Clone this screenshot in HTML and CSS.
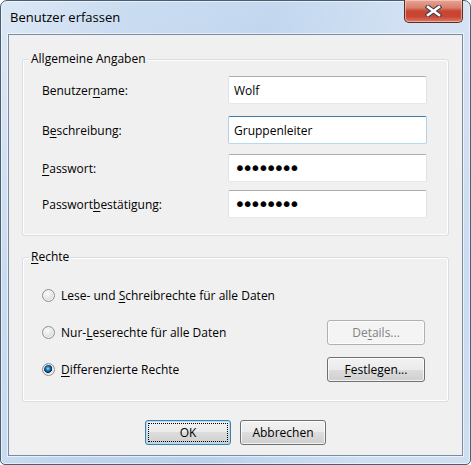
FILE: index.html
```html
<!DOCTYPE html>
<html lang="de">
<head>
    <meta charset="UTF-8">
    <title>Benutzer erfassen</title>
    <link rel="stylesheet" href="styles.css">
</head>
<body>
    <div class="window">
        <div class="titlebar">
            <span class="title">Benutzer erfassen</span>
            <button class="close-btn" type="button" aria-label="Schließen">
                <svg width="17" height="12" viewBox="0 0 17 12">
                    <path d="M3 2 L14 10 M14 2 L3 10" stroke="#3a3f48" stroke-width="4.6" stroke-linecap="square" fill="none"/>
                    <path d="M3 2 L14 10 M14 2 L3 10" stroke="#ffffff" stroke-width="2.6" stroke-linecap="square" fill="none"/>
                </svg>
            </button>
        </div>

        <form class="client">
            <fieldset class="group general">
                <legend>Allgemeine Angaben</legend>
                <div class="group-body">
                    <div class="field row-1">
                        <label for="name">Benutzer<u>n</u>ame:</label>
                        <input id="name" class="textbox" type="text" value="Wolf">
                    </div>
                    <div class="field row-2">
                        <label for="desc">B<u>e</u>schreibung:</label>
                        <input id="desc" class="textbox focused" type="text" value="Gruppenleiter">
                    </div>
                    <div class="field row-3">
                        <label for="pw"><u>P</u>asswort:</label>
                        <input id="pw" class="textbox password" type="password" value="geheim12">
                    </div>
                    <div class="field row-4">
                        <label for="pw2">Passwort<u>b</u>estätigung:</label>
                        <input id="pw2" class="textbox password" type="password" value="geheim12">
                    </div>
                </div>
            </fieldset>

            <fieldset class="group rights">
                <legend><u>R</u>echte</legend>
                <div class="group-body rights-grid">
                    <label class="radio wide">
                        <input type="radio" name="rights">
                        <span>Lese- und <u>S</u>chreibrechte für alle Daten</span>
                    </label>
                    <label class="radio">
                        <input type="radio" name="rights">
                        <span>Nur-<u>L</u>eserechte für alle Daten</span>
                    </label>
                    <button class="btn" type="button" disabled>De<u>t</u>ails...</button>
                    <label class="radio">
                        <input type="radio" name="rights" checked>
                        <span><u>D</u>ifferenzierte Rechte</span>
                    </label>
                    <button class="btn" type="button"><u>F</u>estlegen...</button>
                </div>
            </fieldset>

            <div class="dialog-buttons">
                <button class="btn default" type="submit">OK</button>
                <button class="btn" type="button">Abbrechen</button>
            </div>
        </form>
    </div>
</body>
</html>
```

FILE: styles.css
```css
* {
    margin: 0;
    padding: 0;
    box-sizing: border-box;
}

body {
    background: #ffffff;
    font-family: 'Open Sans', 'Noto Sans', sans-serif;
    font-size: 12px;
    color: #000;
}

u {
    text-underline-offset: 2px;
}

/* Window frame */
.window {
    width: 471px;
    height: 465px;
    border: 1px solid #4b5d72;
    border-radius: 7px 7px 5px 5px;
    padding: 0 7px 8px 7px;
    display: flex;
    flex-direction: column;
    background:
        linear-gradient(100deg, rgba(255, 255, 255, 0.4) 0%, rgba(255, 255, 255, 0.1) 25%, rgba(255, 255, 255, 0) 50%, rgba(255, 255, 255, 0.3) 80%),
        linear-gradient(180deg, #c4d8ef 0%, #b4cdea 60%, #b9d1ec 100%);
    box-shadow: inset 0 0 0 1px rgba(255, 255, 255, 0.55);
}

.titlebar {
    height: 33px;
    display: flex;
    justify-content: space-between;
    align-items: flex-start;
}

.title {
    font-size: 13px;
    margin: 7px 0 0 2px;
    line-height: 18px;
}

.close-btn {
    width: 59px;
    height: 23px;
    margin-top: -1px;
    border: 1px solid #5b2b27;
    border-top: none;
    border-radius: 0 0 5px 5px;
    background: linear-gradient(180deg, #e8a595 0%, #d7806c 35%, #c8452f 50%, #c94535 75%, #dc7a64 100%);
    box-shadow: inset 0 0 0 1px rgba(255, 220, 210, 0.55);
    display: flex;
    align-items: center;
    justify-content: center;
}

/* Client area */
.client {
    flex: 1;
    background: #f0f0f0;
    border: 1px solid #7b8ca0;
    box-shadow: 0 0 0 1px rgba(255, 255, 255, 0.6);
    padding: 16px 13px 0 13px;
    display: flex;
    flex-direction: column;
}

.group {
    border: 1px solid #d5dfe5;
    border-radius: 3px;
    box-shadow: inset 0 0 0 1px #ffffff;
    min-inline-size: 0;
}

.group legend {
    margin-left: 6px;
    padding: 0 2px;
    line-height: 16px;
    background: #f0f0f0;
}

.group-body {
    padding: 9px 21px 17px 19px;
}

/* Allgemeine Angaben */
.field {
    display: flex;
    align-items: center;
    justify-content: space-between;
}

.row-2 { margin-top: 12px; }
.row-3 { margin-top: 10px; }
.row-4 { margin-top: 8px; }

.textbox {
    width: 199px;
    height: 28px;
    padding: 0 5px;
    font-family: inherit;
    font-size: 12px;
    color: #000;
    background: #fff;
    border: 1px solid;
    border-color: #abadb3 #e2e3ea #e3e9ef #e2e3ea;
    border-radius: 2px;
    outline: none;
}

.textbox.focused {
    border-color: #3d7bad #b5cfe7 #b7d9ed #b5cfe7;
}

.textbox.password {
    font-family: 'DejaVu Sans', sans-serif;
    font-size: 20px;
    letter-spacing: -4px;
}

/* Rechte */
.group.rights {
    margin-top: 13px;
}

.rights-grid {
    display: grid;
    grid-template-columns: 1fr 98px;
    grid-auto-rows: 25px;
    row-gap: 12px;
    padding: 18px 23px 19px 19px;
}

.radio {
    display: flex;
    align-items: center;
    gap: 6px;
}

.radio.wide {
    grid-column: 1 / span 2;
}

.radio input {
    appearance: none;
    width: 13px;
    height: 13px;
    border-radius: 50%;
    border: 1px solid #8e8f8f;
    background: radial-gradient(circle at 40% 35%, #fbfbfb 0, #e6e6e6 45%, #cfcfcf 100%);
    box-shadow: inset 0 0 0 1px #f4f4f4;
}

.radio input:checked {
    background:
        radial-gradient(circle at 45% 42%, #9fe4ff 0, #2f93d8 1.5px, #11517f 3px, #0b2a40 4px, transparent 4.5px),
        radial-gradient(circle at 40% 35%, #fbfbfb 0, #e6e6e6 45%, #cfcfcf 100%);
}

/* Buttons */
.btn {
    height: 25px;
    font-family: inherit;
    font-size: 12px;
    color: #000;
    border: 1px solid #707070;
    border-radius: 3px;
    background: linear-gradient(180deg, #f2f2f2 0%, #ebebeb 50%, #dddddd 50%, #cfcfcf 100%);
    box-shadow: inset 0 0 0 1px rgba(255, 255, 255, 0.75);
}

.btn:disabled {
    color: #838383;
    border-color: #adb2b5;
    background: #f4f4f4;
}

.btn.default {
    border-color: #3c7fb1;
    box-shadow: inset 0 0 0 1px #b9dcf2;
    outline: 1px dotted #000;
    outline-offset: -4px;
}

.dialog-buttons {
    display: flex;
    justify-content: center;
    gap: 9px;
    margin-top: 18px;
}

.dialog-buttons .btn {
    width: 86px;
}
```
